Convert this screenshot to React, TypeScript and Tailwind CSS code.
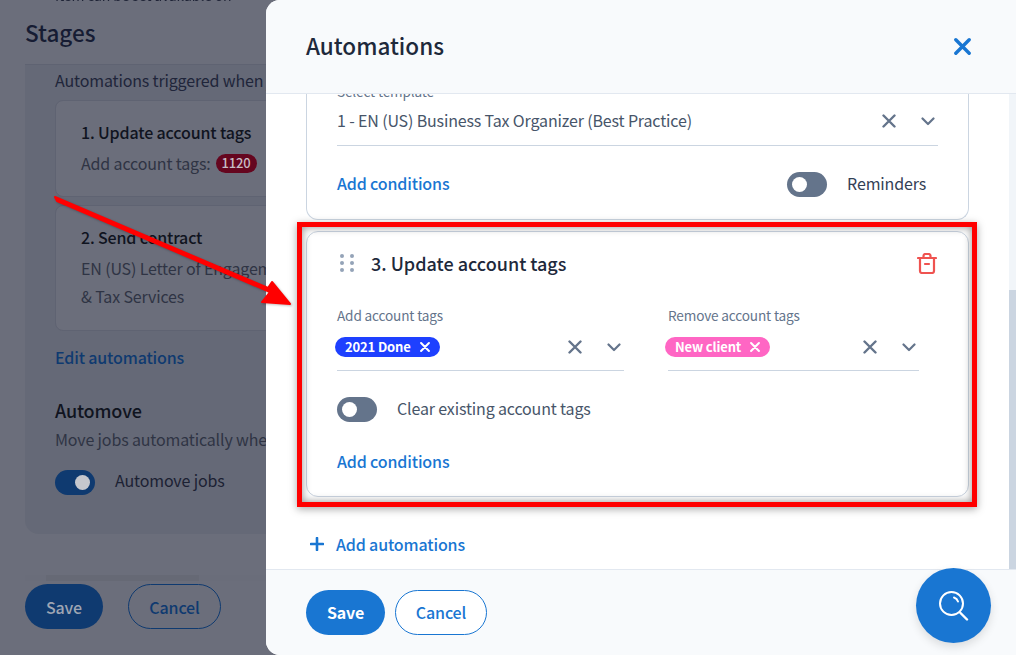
import React from "react";

const font = { fontFamily: '"Noto Sans CJK JP", "Noto Sans", sans-serif' };

function XIcon({ size = 14, color = "#64748b", w = 2.4 }: { size?: number; color?: string; w?: number }) {
  return (
    <svg width={size} height={size} viewBox="0 0 14 14" fill="none" className="shrink-0">
      <path d="M1.5 1.5 12.5 12.5M12.5 1.5 1.5 12.5" stroke={color} strokeWidth={w} strokeLinecap="round" />
    </svg>
  );
}

function Chevron() {
  return (
    <svg width="14" height="9" viewBox="0 0 14 9" fill="none" className="shrink-0">
      <path d="M1.5 1.5 7 7l5.5-5.5" stroke="#64748b" strokeWidth="2.2" strokeLinecap="round" strokeLinejoin="round" />
    </svg>
  );
}

function Toggle({ on = false, dim = false }: { on?: boolean; dim?: boolean }) {
  return (
    <div
      className={`flex h-[25px] w-10 shrink-0 items-center rounded-full px-[5px] ${on ? "justify-end" : "justify-start"} ${
        dim ? "bg-[#0f3a70]" : "bg-[#64748b]"
      }`}
    >
      <div className={`h-[15px] w-[15px] rounded-full ${dim ? "bg-[#c5c7cd]" : "bg-white"}`} />
    </div>
  );
}

function Tag({ label, className }: { label: string; className: string }) {
  return (
    <span className={`flex h-5 items-center gap-[9px] rounded-full pl-[10px] pr-[10px] text-[13px] font-bold text-white ${className}`}>
      {label}
      <XIcon size={10} color="#ffffff" w={2.8} />
    </span>
  );
}

function TagSelect({ title, tag, tagClass, width, offset }: { title: string; tag: string; tagClass: string; width: string; offset: string }) {
  return (
    <div className={width}>
      <div className="text-[13.6px] leading-5 text-[#64748b]">{title}</div>
      <div className="mt-[12px] flex h-[20px] items-center justify-between">
        <div className={offset}>
          <Tag label={tag} className={tagClass} />
        </div>
        <div className="flex items-center gap-[25px] pr-[3px]">
          <XIcon />
          <Chevron />
        </div>
      </div>
      <div className="mt-[13px] h-px bg-[#cbd5e1]" />
    </div>
  );
}

function LeftPage() {
  return (
    <div className="h-full w-full overflow-hidden bg-[#6b6e7b] pl-[25px]">
      <div className="-mt-[11px] h-[12px] pl-[30px] text-sm leading-[12px] text-[#1e2336] blur-[0.6px]">Item can be set available on</div>
      <div className="mt-[15px] h-[48px] text-[22.5px] font-medium leading-8 tracking-normal text-[#161c33]">Stages</div>
      <div className="h-[470px] w-[400px] rounded-b-[14px] border-t border-[#5f6372] bg-[#656977] pl-[30px] pt-[3px]">
        <div className="whitespace-nowrap text-base leading-6 text-[#20253a]">Automations triggered when job moves</div>
        <div className="mt-[8px] h-[97px] rounded-l-[8px] border border-[#5f6372] bg-[#6b6e7b] pl-[25px] pt-[19px]">
          <div className="text-base font-medium leading-6 text-[#10141f]">1. Update account tags</div>
          <div className="mt-[7px] flex items-center gap-[5px] text-base leading-6 text-[#2f3444]">
            Add account tags:
            <span className="flex h-[19px] items-center rounded-full bg-[#65061f] px-[6px] text-[13px] font-medium text-[#c7bcc4]">1120</span>
          </div>
        </div>
        <div className="mt-[8px] h-[126px] rounded-l-[8px] border border-[#5f6372] bg-[#6b6e7b] pl-[25px] pt-[19px]">
          <div className="text-base font-medium leading-6 text-[#10141f]">2. Send contract</div>
          <div className="mt-[5px] w-[300px] text-base leading-7 text-[#2f3444]">
            <div className="whitespace-nowrap">EN (US) Letter of Engagement</div>
            <div>&amp; Tax Services</div>
          </div>
        </div>
        <div className="mt-[14px] text-base font-medium leading-6 text-[#0f3a70]">Edit automations</div>
        <div className="mt-[29px] text-lg font-medium leading-6 text-[#10141f]">Automove</div>
        <div className="mt-[5px] whitespace-nowrap text-base leading-6 text-[#2f3444]">Move jobs automatically when</div>
        <div className="mt-[17px] flex items-center gap-5">
          <Toggle on dim />
          <span className="pb-[5px] text-base text-[#1c2133]">Automove jobs</span>
        </div>
      </div>
      <div className="mt-[41px] h-[6px] bg-[#6a6d7a] pl-[21px]">
        <div className="h-full w-[153px] bg-[#666975]" />
      </div>
      <div className="mt-[3px] flex gap-[25px]">
        <div className="flex h-[45px] w-[78px] items-center justify-center rounded-full bg-[#0f3a70] text-base font-medium text-[#9ea5b3]">Save</div>
        <div className="flex h-[45px] w-[93px] items-center justify-center rounded-full border border-[#0f3a70] text-base font-medium text-[#0f3a70]">Cancel</div>
      </div>
    </div>
  );
}

function Modal() {
  return (
    <div className="absolute inset-y-0 right-0 flex w-[750px] flex-col overflow-hidden rounded-l-[14px] bg-white">
      <header className="flex h-[94px] shrink-0 items-center justify-between border-b border-[#e2e8f0] bg-[#f8fafc] pl-10 pr-[45px]">
        <h1 className="pb-1 text-[22.5px] font-medium leading-8 tracking-normal text-[#1e293b]">Automations</h1>
        <XIcon size={17} color="#1976d2" w={2.8} />
      </header>

      <div className="flex min-h-0 flex-1">
        <div className="min-w-0 flex-1 overflow-hidden pl-10 pr-10">
          <section className="-mt-[10px] h-[136px] rounded-b-[12px] border border-t-0 border-[#cbd5e1] px-[30px]">
            <div className="h-[14px] text-[13.6px] leading-[14px] text-[#64748b]">Select template</div>
            <div className="mt-[7px] flex h-[32px] items-center justify-between pr-[3px]">
              <span className="pb-[2px] text-base text-[#475569]">1 - EN (US) Business Tax Organizer (Best Practice)</span>
              <div className="flex items-center gap-[25px]">
                <XIcon />
                <Chevron />
              </div>
            </div>
            <div className="mt-[8px] h-px bg-[#cbd5e1]" />
            <div className="mt-[25px] flex items-center justify-between pr-[12px]">
              <span className="pb-[3px] text-base font-medium leading-6 text-[#1976d2]">Add conditions</span>
              <div className="flex items-center gap-5">
                <Toggle />
                <span className="pb-[3px] text-base text-[#334155]">Reminders</span>
              </div>
            </div>
          </section>

          <section className="mt-[11px] h-[266px] rounded-[12px] border border-[#cbd5e1] px-[30px] pt-[17px]">
            <div className="flex h-[28px] items-center">
              <svg width="14" height="20" viewBox="0 0 14 20" fill="#94a3b8" className="ml-[3px] mr-[17px] shrink-0">
                <circle cx="2" cy="3" r="2" />
                <circle cx="12" cy="3" r="2" />
                <circle cx="2" cy="10" r="2" />
                <circle cx="12" cy="10" r="2" />
                <circle cx="2" cy="17" r="2" />
                <circle cx="12" cy="17" r="2" />
              </svg>
              <h2 className="flex-1 text-lg font-medium leading-7 tracking-normal text-[#1e293b]">3. Update account tags</h2>
              <svg width="20" height="21" viewBox="0 0 20 21" fill="none" stroke="#ef5350" strokeWidth="2.2" strokeLinecap="round" strokeLinejoin="round" className="-translate-x-px shrink-0">
                <path d="M1 5h18M3 5v13a2 2 0 0 0 2 2h10a2 2 0 0 0 2-2V5M6.5 5V3a2 2 0 0 1 2-2h3a2 2 0 0 1 2 2v2M8 11h4" />
              </svg>
            </div>
            <div className="mt-[28px] flex gap-11">
              <TagSelect title="Add account tags" tag="2021 Done" tagClass="bg-[#1e40ff]" width="w-[287px]" offset="-ml-[2px]" />
              <TagSelect title="Remove account tags" tag="New client" tagClass="bg-[#ff66c4]" width="w-[251px]" offset="-ml-[3px]" />
            </div>
            <div className="mt-[25px] flex items-center gap-5">
              <Toggle />
              <span className="pb-[2px] text-base text-[#475569]">Clear existing account tags</span>
            </div>
            <div className="mt-[27px] text-base font-medium leading-6 text-[#1976d2]">Add conditions</div>
          </section>

          <div className="mt-[35px] flex items-center">
            <svg width="14" height="14" viewBox="0 0 14 14" fill="none" className="ml-[4px] mr-[12px] shrink-0">
              <path d="M7 1v12M1 7h12" stroke="#1976d2" strokeWidth="2.6" strokeLinecap="round" />
            </svg>
            <span className="text-base font-medium leading-6 text-[#1976d2]">Add automations</span>
          </div>
        </div>
        <div className="flex w-[7px] shrink-0 flex-col bg-[#f1f5f9]">
          <div className="h-[196px]" />
          <div className="flex-1 bg-[#cbd5e1]" />
        </div>
      </div>

      <footer className="flex h-[86px] shrink-0 items-center gap-[10px] border-t border-[#e2e8f0] bg-[#f8fafc] pb-[1px] pl-10">
        <button className="flex h-[45px] w-[79px] items-center justify-center rounded-full bg-[#1976d2] text-base font-bold text-white">Save</button>
        <button className="flex h-[45px] w-[92px] items-center justify-center rounded-full border border-[#1976d2] bg-white text-base font-medium text-[#1976d2]">Cancel</button>
      </footer>
    </div>
  );
}

export default function App() {
  return (
    <div className="relative h-[655px] w-[1016px] overflow-hidden tracking-[-0.15px]" style={font}>
      <LeftPage />
      <Modal />

      <div className="absolute left-[297px] top-[222px] h-[285px] w-[680px] border-[5px] border-[#ff0000] shadow-[0_2px_8px_rgba(0,0,0,0.35),inset_0_0_8px_rgba(0,0,0,0.45)]" />

      <svg className="absolute left-0 top-0 drop-shadow-[1px_1px_1px_rgba(0,0,0,0.25)]" width="300" height="320" viewBox="0 0 300 320" fill="#ff0000">
        <path d="M55 197 57 201 270 292 262 302 290 304 272 282 268 288Z" stroke="#ff0000" strokeWidth="2" strokeLinejoin="round" />
      </svg>

      <div className="absolute left-[916px] top-[568px] flex h-[75px] w-[75px] items-center justify-center rounded-full bg-[#1976d2] shadow-[0_4px_10px_rgba(0,0,0,0.12)]">
        <svg width="30" height="30" viewBox="0 0 30 30" fill="none" stroke="#ffffff" strokeWidth="2" strokeLinecap="round">
          <circle cx="12.5" cy="12.5" r="11.5" />
          <path d="M21 21.5 28 28.5" strokeWidth="2.4" />
          <path d="M15 6.5a6 6 0 0 1 4 4" />
        </svg>
      </div>
    </div>
  );
}
